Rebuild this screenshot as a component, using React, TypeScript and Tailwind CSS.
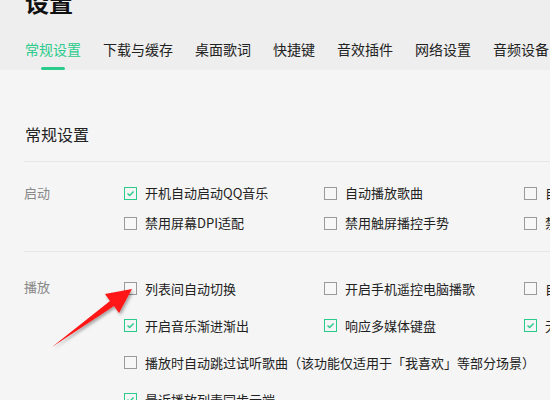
import React from "react";

const GREEN = "#2bcb8c";

function Box({ checked }: { checked?: boolean }) {
  return checked ? (
    <span className="w-[13px] h-[13px] shrink-0 border border-[#2bcb8c] flex items-center justify-center bg-[#f5f5f5]">
      <svg width="9" height="9" viewBox="0 0 9 9">
        <path d="M1.5 4.6 L3.6 6.6 L7.6 2.4" fill="none" stroke={GREEN} strokeWidth="1.4" />
      </svg>
    </span>
  ) : (
    <span className="w-[13px] h-[13px] shrink-0 border border-[#9a9a9a] bg-[#f7f7f7]" />
  );
}

function Item({ text, checked }: { text: string; checked?: boolean }) {
  return (
    <div className="flex items-center gap-[8px] whitespace-nowrap w-[200px] shrink-0">
      <Box checked={checked} />
      <span className="text-[13px] text-[#222]">{text}</span>
    </div>
  );
}

const tabs = ["常规设置", "下载与缓存", "桌面歌词", "快捷键", "音效插件", "网络设置", "音频设备"];

export default function App() {
  return (
    <div
      className="relative w-[550px] h-[400px] overflow-hidden bg-[#f5f5f5]"
      style={{ fontFamily: '"Noto Sans CJK SC", "Noto Sans", sans-serif' }}
    >
      <div className="h-[70px] bg-[#eeeeee] px-[25px] flex flex-col">
        <div className="mt-[-14px] text-[24px] leading-[32px] font-bold text-[#111]">设置</div>
        <div className="mt-[21px] flex gap-[22px] whitespace-nowrap">
          {tabs.map((t, i) => (
            <div key={t} className="flex flex-col items-center shrink-0">
              <span className={`text-[14px] leading-[20px] ${i === 0 ? "text-[#2bcb8c]" : "text-[#222]"}`}>{t}</span>
              <span className={`mt-[8px] h-[3px] w-[24px] rounded-full ${i === 0 ? "bg-[#2bcb8c]" : "bg-transparent"}`} />
            </div>
          ))}
        </div>
      </div>

      <div className="pl-[24px]">
        <div className="pt-[52px] pl-[1px] text-[16px] leading-[24px] text-[#222]">常规设置</div>
        <div className="mt-[15px] h-px bg-[#e6e6e6]" />
        <div className="flex pt-[16px] pb-[13px]">
          <div className="w-[100px] shrink-0 text-[13px] leading-[30px] text-[#888]">启动</div>
          <div className="flex flex-col">
            <div className="flex h-[30px]">
              <Item text="开机自动启动QQ音乐" checked />
              <Item text="自动播放歌曲" />
              <Item text="自动打开歌词" />
            </div>
            <div className="flex h-[30px]">
              <Item text="禁用屏幕DPI适配" />
              <Item text="禁用触屏播控手势" />
              <Item text="禁用硬件加速" />
            </div>
          </div>
        </div>
        <div className="h-px bg-[#e6e6e6]" />
        <div className="flex pt-[18px]">
          <div className="w-[100px] shrink-0 text-[13px] leading-[33px] text-[#888]">播放</div>
          <div className="flex flex-col">
            <div className="flex h-[37px]">
              <Item text="列表间自动切换" />
              <Item text="开启手机遥控电脑播歌" />
              <Item text="自动打开歌词" />
            </div>
            <div className="flex h-[37px]">
              <Item text="开启音乐渐进渐出" checked />
              <Item text="响应多媒体键盘" checked />
              <Item text="无缝播放" checked />
            </div>
            <div className="flex h-[37px]">
              <div className="flex items-center gap-[8px] whitespace-nowrap">
                <Box />
                <span className="text-[13px] text-[#222]">播放时自动跳过试听歌曲（该功能仅适用于「我喜欢」等部分场景）</span>
              </div>
            </div>
            <div className="flex h-[37px]">
              <Item text="最近播放列表同步云端" checked />
            </div>
          </div>
        </div>
      </div>

      <svg className="absolute left-0 top-0 pointer-events-none" width="550" height="400">
        <defs>
          <filter id="sh" x="-20%" y="-20%" width="140%" height="140%">
            <feDropShadow dx="1.5" dy="2" stdDeviation="1.5" floodColor="#000" floodOpacity="0.35" />
          </filter>
        </defs>
        <polygon
          points="132,289 105,294 110,301 52,347 114,306 119,313"
          fill="#ff1414"
          filter="url(#sh)"
        />
      </svg>
    </div>
  );
}
